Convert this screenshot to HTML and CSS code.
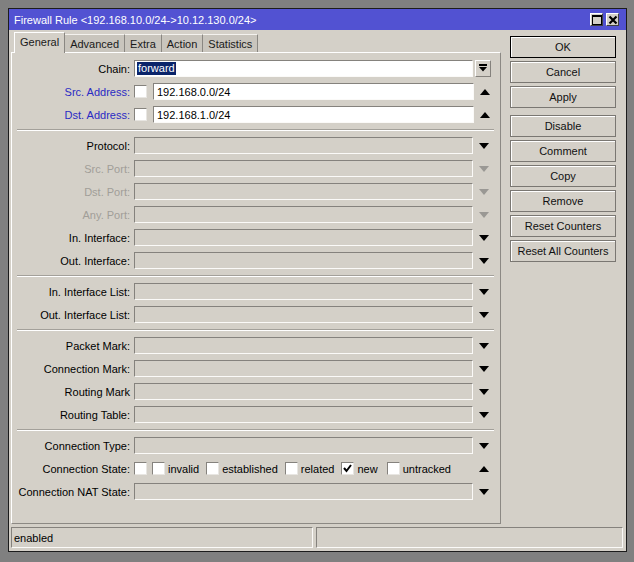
FILE: index.html
```html
<!DOCTYPE html>
<html>
<head>
<meta charset="utf-8">
<link rel="stylesheet" href="styles.css">
</head>
<body>
<div class="window">
  <div class="titlebar">
    <span class="title">Firewall Rule &lt;192.168.10.0/24-&gt;10.12.130.0/24&gt;</span>
    <div class="tbtns">
      <span class="tbtn"><svg width="10" height="10" viewBox="0 0 10 10"><rect x="0.5" y="0.5" width="9" height="9" fill="none" stroke="#000"/><rect x="0" y="0" width="10" height="2" fill="#000"/></svg></span>
      <span class="tbtn"><svg width="10" height="10" viewBox="0 0 10 10"><path d="M1.5 1.5 L8.5 8.5 M8.5 1.5 L1.5 8.5" stroke="#000" stroke-width="2.2"/></svg></span>
    </div>
  </div>
  <div class="main">
    <div class="left">
      <div class="tabs">
        <span class="tab active">General</span>
        <span class="tab">Advanced</span>
        <span class="tab">Extra</span>
        <span class="tab">Action</span>
        <span class="tab">Statistics</span>
      </div>
      <div class="panel">
        <div class="row">
          <span class="lbl">Chain:</span>
          <div class="field white"><span class="sel">forward</span></div>
          <span class="arr"><span class="dropbtn"><svg width="8" height="9" viewBox="0 0 8 9"><rect x="0" y="0" width="8" height="2" fill="#000"/><path d="M0 3 H8 L4 7.5 Z" fill="#000"/></svg></span></span>
        </div>
        <div class="row">
          <span class="lbl blue">Src. Address:</span>
          <span class="cb"></span>
          <div class="field white short">192.168.0.0/24</div>
          <span class="arr"><svg class="tri" width="10" height="6" viewBox="0 0 10 6"><path d="M5 0 L10 6 H0 Z" fill="#000"/></svg></span>
        </div>
        <div class="row">
          <span class="lbl blue">Dst. Address:</span>
          <span class="cb"></span>
          <div class="field white short">192.168.1.0/24</div>
          <span class="arr"><svg class="tri" width="10" height="6" viewBox="0 0 10 6"><path d="M5 0 L10 6 H0 Z" fill="#000"/></svg></span>
        </div>
        <div class="sep"></div>
        <div class="row">
          <span class="lbl">Protocol:</span>
          <div class="field"></div>
          <span class="arr"><svg class="tri" width="10" height="6" viewBox="0 0 10 6"><path d="M0 0 H10 L5 6 Z" fill="#000"/></svg></span>
        </div>
        <div class="row">
          <span class="lbl dim">Src. Port:</span>
          <div class="field"></div>
          <span class="arr"><svg class="tri" width="10" height="6" viewBox="0 0 10 6"><path d="M0 0 H10 L5 6 Z" fill="#9a9894"/></svg></span>
        </div>
        <div class="row">
          <span class="lbl dim">Dst. Port:</span>
          <div class="field"></div>
          <span class="arr"><svg class="tri" width="10" height="6" viewBox="0 0 10 6"><path d="M0 0 H10 L5 6 Z" fill="#9a9894"/></svg></span>
        </div>
        <div class="row">
          <span class="lbl dim">Any. Port:</span>
          <div class="field"></div>
          <span class="arr"><svg class="tri" width="10" height="6" viewBox="0 0 10 6"><path d="M0 0 H10 L5 6 Z" fill="#9a9894"/></svg></span>
        </div>
        <div class="row">
          <span class="lbl">In. Interface:</span>
          <div class="field"></div>
          <span class="arr"><svg class="tri" width="10" height="6" viewBox="0 0 10 6"><path d="M0 0 H10 L5 6 Z" fill="#000"/></svg></span>
        </div>
        <div class="row">
          <span class="lbl">Out. Interface:</span>
          <div class="field"></div>
          <span class="arr"><svg class="tri" width="10" height="6" viewBox="0 0 10 6"><path d="M0 0 H10 L5 6 Z" fill="#000"/></svg></span>
        </div>
        <div class="sep"></div>
        <div class="row">
          <span class="lbl">In. Interface List:</span>
          <div class="field"></div>
          <span class="arr"><svg class="tri" width="10" height="6" viewBox="0 0 10 6"><path d="M0 0 H10 L5 6 Z" fill="#000"/></svg></span>
        </div>
        <div class="row">
          <span class="lbl">Out. Interface List:</span>
          <div class="field"></div>
          <span class="arr"><svg class="tri" width="10" height="6" viewBox="0 0 10 6"><path d="M0 0 H10 L5 6 Z" fill="#000"/></svg></span>
        </div>
        <div class="sep"></div>
        <div class="row">
          <span class="lbl">Packet Mark:</span>
          <div class="field"></div>
          <span class="arr"><svg class="tri" width="10" height="6" viewBox="0 0 10 6"><path d="M0 0 H10 L5 6 Z" fill="#000"/></svg></span>
        </div>
        <div class="row">
          <span class="lbl">Connection Mark:</span>
          <div class="field"></div>
          <span class="arr"><svg class="tri" width="10" height="6" viewBox="0 0 10 6"><path d="M0 0 H10 L5 6 Z" fill="#000"/></svg></span>
        </div>
        <div class="row">
          <span class="lbl">Routing Mark</span>
          <div class="field"></div>
          <span class="arr"><svg class="tri" width="10" height="6" viewBox="0 0 10 6"><path d="M0 0 H10 L5 6 Z" fill="#000"/></svg></span>
        </div>
        <div class="row">
          <span class="lbl">Routing Table:</span>
          <div class="field"></div>
          <span class="arr"><svg class="tri" width="10" height="6" viewBox="0 0 10 6"><path d="M0 0 H10 L5 6 Z" fill="#000"/></svg></span>
        </div>
        <div class="sep"></div>
        <div class="row">
          <span class="lbl">Connection Type:</span>
          <div class="field"></div>
          <span class="arr"><svg class="tri" width="10" height="6" viewBox="0 0 10 6"><path d="M0 0 H10 L5 6 Z" fill="#000"/></svg></span>
        </div>
        <div class="row">
          <span class="lbl">Connection State:</span>
          <div class="states">
            <span class="cb lead"></span>
            <span class="cb"></span><span class="stxt">invalid</span>
            <span class="cb"></span><span class="stxt">established</span>
            <span class="cb"></span><span class="stxt">related</span>
            <span class="cb"><svg width="11" height="11" viewBox="0 0 11 11"><path d="M2 5 L4.5 8 L9 2" fill="none" stroke="#000" stroke-width="2"/></svg></span><span class="stxt wide">new</span>
            <span class="cb"></span><span class="stxt">untracked</span>
          </div>
          <span class="arr"><svg class="tri" width="10" height="6" viewBox="0 0 10 6"><path d="M5 0 L10 6 H0 Z" fill="#000"/></svg></span>
        </div>
        <div class="row">
          <span class="lbl">Connection NAT State:</span>
          <div class="field"></div>
          <span class="arr"><svg class="tri" width="10" height="6" viewBox="0 0 10 6"><path d="M0 0 H10 L5 6 Z" fill="#000"/></svg></span>
        </div>
      </div>
    </div>
    <div class="right">
      <span class="btn default">OK</span>
      <span class="btn">Cancel</span>
      <span class="btn">Apply</span>
      <span class="btn gap">Disable</span>
      <span class="btn">Comment</span>
      <span class="btn">Copy</span>
      <span class="btn">Remove</span>
      <span class="btn">Reset Counters</span>
      <span class="btn">Reset All Counters</span>
    </div>
  </div>
  <div class="status">
    <div class="sp sp1">enabled</div>
    <div class="sp sp2"></div>
  </div>
</div>
</body>
</html>
```
FILE: styles.css
```css
* { box-sizing: border-box; }
html, body { margin: 0; padding: 0; }
body {
  background: #808080;
  font-family: "Liberation Sans", Arial, sans-serif;
  font-size: 11px;
  color: #000;
  width: 634px;
  height: 562px;
  overflow: hidden;
}
.window {
  margin: 8px 0 0 8px;
  width: 619px;
  height: 544px;
  background: #d4d0c8;
  border: 1px solid #1c1c1c;
  display: flex;
  flex-direction: column;
}
.titlebar {
  height: 21px;
  background: #5252d2;
  display: flex;
  align-items: center;
  padding: 0 7px 0 5px;
  flex-shrink: 0;
}
.title {
  color: #fff;
  flex: 1;
  white-space: nowrap;
}
.tbtns { display: flex; gap: 3px; }
.tbtn {
  width: 13px;
  height: 13px;
  background: #d4d0c8;
  border: 1px solid;
  border-color: #fff #404040 #404040 #fff;
  display: flex;
  align-items: center;
  justify-content: center;
}
.main {
  display: flex;
  height: 496px;
  padding: 2px 0 0 2px;
  flex-shrink: 0;
}
.left {
  width: 490px;
  display: flex;
  flex-direction: column;
}
.tabs {
  display: flex;
  height: 20px;
  padding-left: 3px;
  align-items: flex-end;
}
.tab {
  height: 18px;
  padding: 0 5px;
  display: flex;
  align-items: center;
  background: #c9c5bd;
  border-top: 1px solid #f4f2ee;
  border-right: 1px solid #8a8782;
  color: #1a1a1a;
}
.tab.active {
  height: 21px;
  margin-bottom: -1px;
  background: #d4d0c8;
  border-left: 1px solid #fff;
  border-top: 1px solid #fff;
  padding-bottom: 2px;
  position: relative;
  z-index: 1;
}
.panel {
  height: 472px;
  border-top: 1px solid #fff;
  border-left: 1px solid #fff;
  border-right: 1px solid #8c8984;
  border-bottom: 1px solid #8c8984;
  display: flex;
  flex-direction: column;
  gap: 6px;
  padding-top: 7px;
}
.row {
  display: flex;
  align-items: center;
  height: 17px;
  flex-shrink: 0;
}
.lbl {
  width: 118px;
  margin-right: 4px;
  text-align: right;
  white-space: nowrap;
  flex-shrink: 0;
}
.lbl.blue { color: #2a2ac4; }
.lbl.dim { color: #a19e98; }
.field {
  width: 339px;
  height: 17px;
  border-top: 1px solid #85827d;
  border-left: 1px solid #85827d;
  border-bottom: 1px solid #fbfaf8;
  border-right: 1px solid #fbfaf8;
  display: flex;
  align-items: center;
  padding-left: 3px;
  white-space: nowrap;
  flex-shrink: 0;
}
.field.white { background: #fff; }
.field.short { width: 321px; }
.sel {
  background: #0a246a;
  color: #fff;
  margin-left: -1px;
  padding: 0 1px;
  line-height: 13px;
}
.cb {
  width: 13px;
  height: 13px;
  background: #fff;
  border-top: 1px solid #85827d;
  border-left: 1px solid #85827d;
  border-bottom: 1px solid #e8e6e2;
  border-right: 1px solid #e8e6e2;
  margin-right: 6px;
  flex-shrink: 0;
  display: flex;
  align-items: center;
  justify-content: center;
}
.states {
  width: 339px;
  display: flex;
  align-items: center;
  flex-shrink: 0;
}
.states .cb { margin-right: 3px; }
.states .cb.lead { margin-right: 5px; }
.stxt { margin-right: 7px; white-space: nowrap; }
.stxt.wide { margin-right: 9px; }
.arr {
  width: 26px;
  display: flex;
  align-items: center;
  padding-left: 6px;
}
.dropbtn {
  width: 16px;
  height: 17px;
  margin-left: -4px;
  border: 1px solid;
  border-color: #fff #85827d #85827d #fff;
  display: flex;
  align-items: center;
  justify-content: center;
}
.sep {
  margin: 0 6px 0 5px;
  height: 2px;
  border-top: 1px solid #a3a09a;
  border-bottom: 1px solid #fff;
  flex-shrink: 0;
}
.right {
  margin-left: 9px;
  padding-top: 4px;
  display: flex;
  flex-direction: column;
  gap: 3px;
}
.btn {
  width: 106px;
  height: 22px;
  border: 1px solid #7a7772;
  box-shadow: inset 1px 1px 0 #fff;
  display: flex;
  align-items: center;
  justify-content: center;
  color: #111;
  white-space: nowrap;
}
.btn.default { border-color: #000; }
.btn.gap { margin-top: 4px; }
.status {
  display: flex;
  gap: 3px;
  padding-left: 2px;
  margin-top: 1px;
  height: 21px;
}
.sp {
  height: 21px;
  border-top: 1px solid #85827d;
  border-left: 1px solid #85827d;
  border-bottom: 1px solid #fbfaf8;
  border-right: 1px solid #fbfaf8;
  display: flex;
  align-items: center;
  padding-left: 2px;
}
.sp1 { width: 302px; }
.sp2 { width: 307px; }
```
